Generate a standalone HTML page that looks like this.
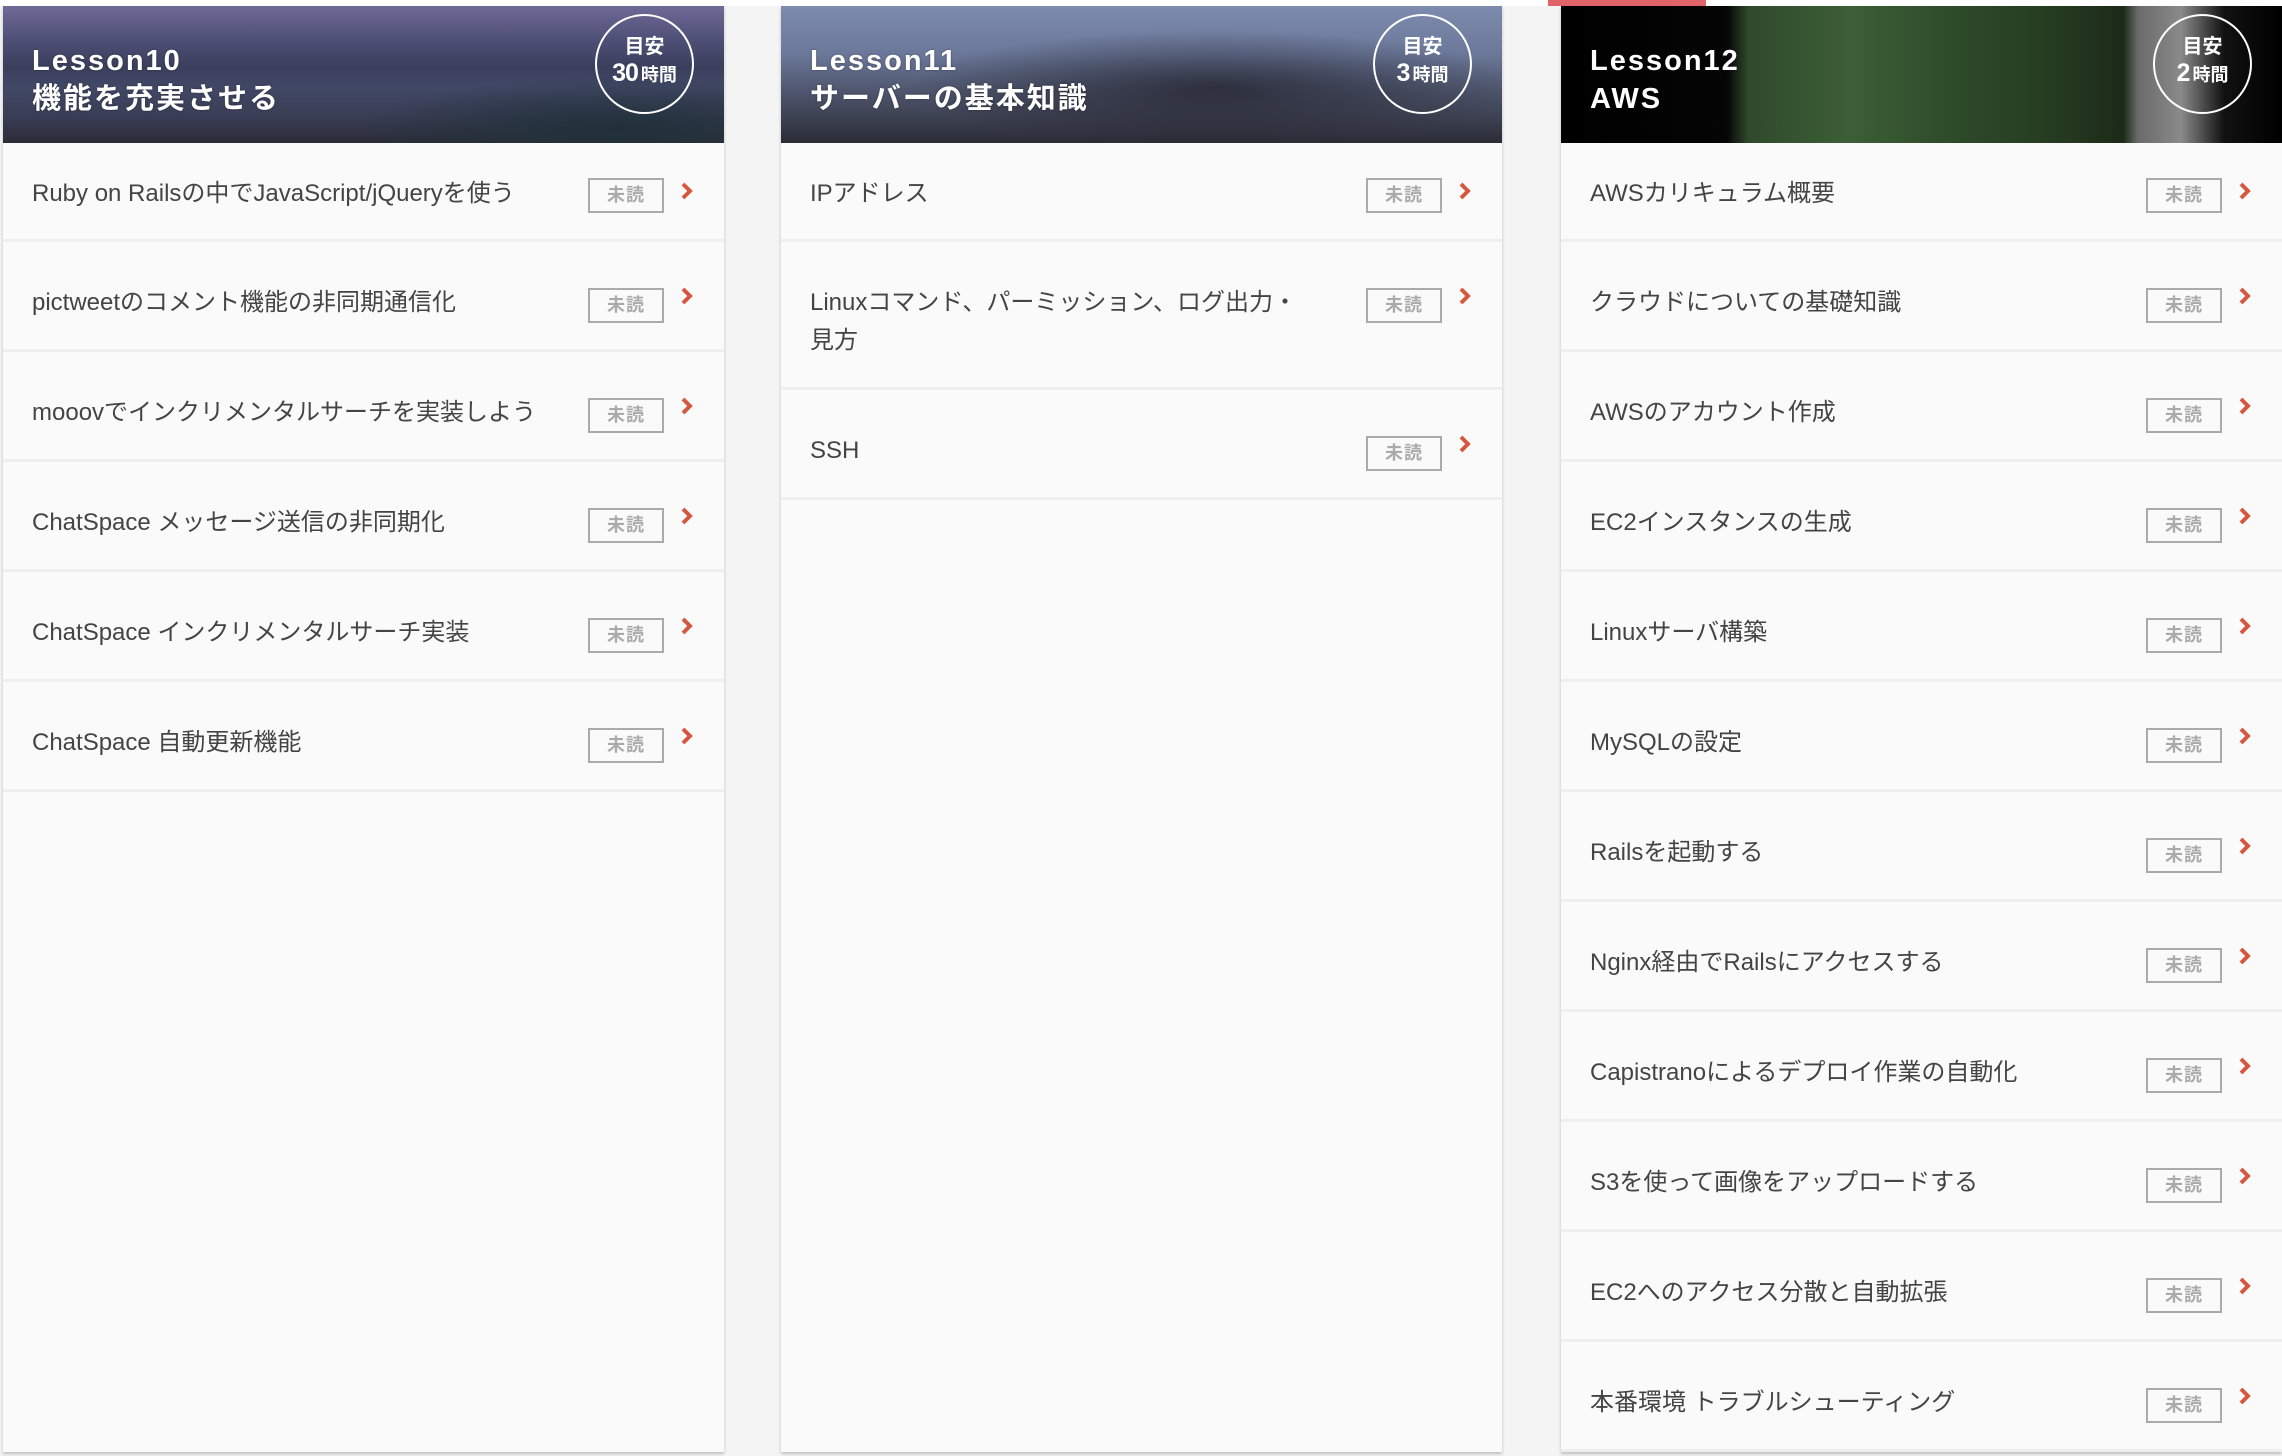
<!DOCTYPE html>
<html><head><meta charset="utf-8">
<style>
*{box-sizing:border-box;margin:0;padding:0}
body{width:2282px;height:1456px;background:#f4f4f4;overflow:hidden;position:relative;font-family:"Liberation Sans","Noto Sans CJK JP",sans-serif}
.topbar{position:absolute;left:0;top:0;width:2282px;height:6px;background:#fff}
.red{position:absolute;left:1548px;top:0;width:158px;height:6px;background:#e0646a}
.card{position:absolute;top:6px;height:1446px;width:721px;background:#fafafa;box-shadow:0 2px 3px rgba(0,0,0,.22);overflow:hidden}
.hd{position:relative;height:137px;color:#fff}
.hd .t{position:absolute;left:29px;top:36px;font-size:29px;line-height:38px;letter-spacing:2px;font-weight:bold;text-shadow:0 0 2px rgba(0,0,0,.4)}
.circ{position:absolute;right:30px;top:8px;width:99px;height:100px;border:2px solid #fff;border-radius:50%;text-align:center;font-weight:bold}
.circ .a{margin-top:19px;font-size:20px;line-height:24px}
.circ .b{font-size:18px;line-height:28px}
.circ .b b{font-size:25px;letter-spacing:-1px;margin-right:3px}
.row{position:relative;height:110px;border-bottom:3px solid #efefef;padding:42px 0 0 29px;font-size:24px;line-height:38px;color:#444;white-space:nowrap}
.row.f{height:99px;padding-top:32px}
.badge{position:absolute;right:60px;width:76px;height:35px;border:2px solid #aaa;color:#aaa;font-weight:bold;font-size:18px;line-height:31px;text-align:center;letter-spacing:1px}
.chev{position:absolute;right:30px;width:14px;height:20px}
.row .chev{top:44px}
.row.f .chev{top:38px}
.row .badge{top:46px}
.row.f .badge{top:35px}
.h1{background:radial-gradient(ellipse at 85% 90%,#20303a 0,rgba(0,0,0,0) 30%),linear-gradient(180deg,#6e6a98 0%,#4e4f75 25%,#3a3f5c 45%,#414866 60%,#3a3e55 80%,#2b2c38 100%)}
.h2{background:radial-gradient(ellipse at 60% 60%,rgba(30,30,40,.7) 0,rgba(0,0,0,0) 50%),linear-gradient(180deg,#7d8bae 0%,#6b7899 35%,#4c5369 65%,#2b2c36 100%)}
.h3{background:linear-gradient(90deg,#000 0,#050505 23%,#2f4a2c 26%,#3d5e37 40%,#2d4a29 55%,#24391f 70%,#1c2a18 78%,#6a6a6a 80%,#8a8a8a 86%,#111 92%,#000 100%)}
</style></head><body>
<div class="topbar"></div><div class="red"></div>

<div class="card" style="left:3px">
 <div class="hd h1"><div class="t">Lesson10<br>機能を充実させる</div><div class="circ"><div class="a">目安</div><div class="b"><b>30</b>時間</div></div></div>
 <div class="row f">Ruby on Railsの中でJavaScript/jQueryを使う<div class="badge">未読</div><svg class="chev" viewBox="0 0 14 20"><polyline points="3,3 10,10 3,17" fill="none" stroke="#d4583f" stroke-width="4"/></svg></div>
 <div class="row">pictweetのコメント機能の非同期通信化<div class="badge">未読</div><svg class="chev" viewBox="0 0 14 20"><polyline points="3,3 10,10 3,17" fill="none" stroke="#d4583f" stroke-width="4"/></svg></div>
 <div class="row">mooovでインクリメンタルサーチを実装しよう<div class="badge">未読</div><svg class="chev" viewBox="0 0 14 20"><polyline points="3,3 10,10 3,17" fill="none" stroke="#d4583f" stroke-width="4"/></svg></div>
 <div class="row">ChatSpace メッセージ送信の非同期化<div class="badge">未読</div><svg class="chev" viewBox="0 0 14 20"><polyline points="3,3 10,10 3,17" fill="none" stroke="#d4583f" stroke-width="4"/></svg></div>
 <div class="row">ChatSpace インクリメンタルサーチ実装<div class="badge">未読</div><svg class="chev" viewBox="0 0 14 20"><polyline points="3,3 10,10 3,17" fill="none" stroke="#d4583f" stroke-width="4"/></svg></div>
 <div class="row">ChatSpace 自動更新機能<div class="badge">未読</div><svg class="chev" viewBox="0 0 14 20"><polyline points="3,3 10,10 3,17" fill="none" stroke="#d4583f" stroke-width="4"/></svg></div>
</div>

<div class="card" style="left:781px">
 <div class="hd h2"><div class="t">Lesson11<br>サーバーの基本知識</div><div class="circ"><div class="a">目安</div><div class="b"><b>3</b>時間</div></div></div>
 <div class="row f">IPアドレス<div class="badge">未読</div><svg class="chev" viewBox="0 0 14 20"><polyline points="3,3 10,10 3,17" fill="none" stroke="#d4583f" stroke-width="4"/></svg></div>
 <div class="row" style="height:148px">Linuxコマンド、パーミッション、ログ出力・<br>見方<div class="badge">未読</div><svg class="chev" viewBox="0 0 14 20"><polyline points="3,3 10,10 3,17" fill="none" stroke="#d4583f" stroke-width="4"/></svg></div>
 <div class="row">SSH<div class="badge">未読</div><svg class="chev" viewBox="0 0 14 20"><polyline points="3,3 10,10 3,17" fill="none" stroke="#d4583f" stroke-width="4"/></svg></div>
</div>

<div class="card" style="left:1561px">
 <div class="hd h3"><div class="t">Lesson12<br>AWS</div><div class="circ"><div class="a">目安</div><div class="b"><b>2</b>時間</div></div></div>
 <div class="row f">AWSカリキュラム概要<div class="badge">未読</div><svg class="chev" viewBox="0 0 14 20"><polyline points="3,3 10,10 3,17" fill="none" stroke="#d4583f" stroke-width="4"/></svg></div>
 <div class="row">クラウドについての基礎知識<div class="badge">未読</div><svg class="chev" viewBox="0 0 14 20"><polyline points="3,3 10,10 3,17" fill="none" stroke="#d4583f" stroke-width="4"/></svg></div>
 <div class="row">AWSのアカウント作成<div class="badge">未読</div><svg class="chev" viewBox="0 0 14 20"><polyline points="3,3 10,10 3,17" fill="none" stroke="#d4583f" stroke-width="4"/></svg></div>
 <div class="row">EC2インスタンスの生成<div class="badge">未読</div><svg class="chev" viewBox="0 0 14 20"><polyline points="3,3 10,10 3,17" fill="none" stroke="#d4583f" stroke-width="4"/></svg></div>
 <div class="row">Linuxサーバ構築<div class="badge">未読</div><svg class="chev" viewBox="0 0 14 20"><polyline points="3,3 10,10 3,17" fill="none" stroke="#d4583f" stroke-width="4"/></svg></div>
 <div class="row">MySQLの設定<div class="badge">未読</div><svg class="chev" viewBox="0 0 14 20"><polyline points="3,3 10,10 3,17" fill="none" stroke="#d4583f" stroke-width="4"/></svg></div>
 <div class="row">Railsを起動する<div class="badge">未読</div><svg class="chev" viewBox="0 0 14 20"><polyline points="3,3 10,10 3,17" fill="none" stroke="#d4583f" stroke-width="4"/></svg></div>
 <div class="row">Nginx経由でRailsにアクセスする<div class="badge">未読</div><svg class="chev" viewBox="0 0 14 20"><polyline points="3,3 10,10 3,17" fill="none" stroke="#d4583f" stroke-width="4"/></svg></div>
 <div class="row">Capistranoによるデプロイ作業の自動化<div class="badge">未読</div><svg class="chev" viewBox="0 0 14 20"><polyline points="3,3 10,10 3,17" fill="none" stroke="#d4583f" stroke-width="4"/></svg></div>
 <div class="row">S3を使って画像をアップロードする<div class="badge">未読</div><svg class="chev" viewBox="0 0 14 20"><polyline points="3,3 10,10 3,17" fill="none" stroke="#d4583f" stroke-width="4"/></svg></div>
 <div class="row">EC2へのアクセス分散と自動拡張<div class="badge">未読</div><svg class="chev" viewBox="0 0 14 20"><polyline points="3,3 10,10 3,17" fill="none" stroke="#d4583f" stroke-width="4"/></svg></div>
 <div class="row">本番環境 トラブルシューティング<div class="badge">未読</div><svg class="chev" viewBox="0 0 14 20"><polyline points="3,3 10,10 3,17" fill="none" stroke="#d4583f" stroke-width="4"/></svg></div>
</div>
</body></html>
